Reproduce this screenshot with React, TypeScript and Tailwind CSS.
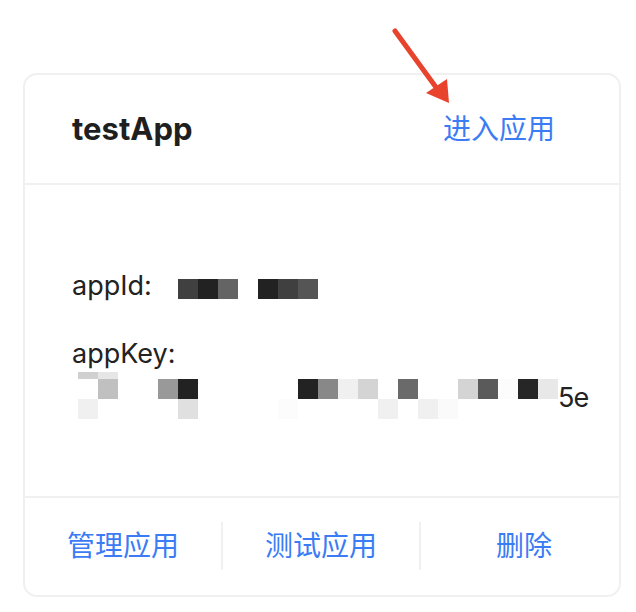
import React from 'react'

// 打码像素块（appKey 第二行）
const keyCells: { col: number; row: number; cls: string }[] = [
  { col: 1, row: 1, cls: 'bg-[#d0d0d0]' },
  { col: 2, row: 1, cls: 'bg-[#e6e6e6]' },
  { col: 2, row: 2, cls: 'bg-[#c0c0c0]' },
  { col: 5, row: 2, cls: 'bg-[#999999]' },
  { col: 6, row: 2, cls: 'bg-[#222222]' },
  { col: 12, row: 2, cls: 'bg-[#222222]' },
  { col: 13, row: 2, cls: 'bg-[#888888]' },
  { col: 14, row: 2, cls: 'bg-[#f0f0f0]' },
  { col: 15, row: 2, cls: 'bg-[#d4d4d4]' },
  { col: 17, row: 2, cls: 'bg-[#6a6a6a]' },
  { col: 20, row: 2, cls: 'bg-[#d4d4d4]' },
  { col: 21, row: 2, cls: 'bg-[#5a5a5a]' },
  { col: 22, row: 2, cls: 'bg-[#fcfcfc]' },
  { col: 23, row: 2, cls: 'bg-[#262626]' },
  { col: 24, row: 2, cls: 'bg-[#e8e8e8]' },
  { col: 1, row: 3, cls: 'bg-[#f0f0f0]' },
  { col: 6, row: 3, cls: 'bg-[#e0e0e0]' },
  { col: 11, row: 3, cls: 'bg-[#fcfcfc]' },
  { col: 16, row: 3, cls: 'bg-[#f0f0f0]' },
  { col: 18, row: 3, cls: 'bg-[#f0f0f0]' },
  { col: 19, row: 3, cls: 'bg-[#fafafa]' },
]

const colClass: Record<number, string> = {
  1: 'col-start-1', 2: 'col-start-2', 5: 'col-start-5', 6: 'col-start-6',
  11: 'col-start-11', 12: 'col-start-12', 13: 'col-start-13', 14: 'col-start-[14]',
  15: 'col-start-[15]', 16: 'col-start-[16]', 17: 'col-start-[17]', 18: 'col-start-[18]',
  19: 'col-start-[19]', 20: 'col-start-[20]', 21: 'col-start-[21]', 22: 'col-start-[22]',
  23: 'col-start-[23]', 24: 'col-start-[24]',
}
const rowClass: Record<number, string> = { 1: 'row-start-1', 2: 'row-start-2', 3: 'row-start-3' }

function Arrow() {
  return (
    <svg className="absolute left-0 top-0 pointer-events-none" width="636" height="120" viewBox="0 0 636 120">
      <line x1="395" y1="31" x2="438" y2="90" stroke="#e8432c" strokeWidth="5" strokeLinecap="round" />
      <polygon points="449,103 426,93 447,79" fill="#e8432c" />
    </svg>
  )
}

export default function App() {
  return (
    <div
      className="relative w-[636px] h-[612px] bg-white overflow-hidden"
      style={{ fontFamily: 'Inter, "Noto Sans CJK SC", sans-serif' }}
    >
      <Arrow />
      <div className="ml-[23px] mt-[73px] w-[598px] border-2 border-[#f0f0f0] rounded-[14px] bg-white">
        {/* 头部 */}
        <div className="h-[110px] pl-[47px] pr-[64px] flex items-center justify-between border-b-2 border-[#f0f0f0]">
          <span className="text-[31px] font-bold text-[#1f1f1f]">testApp</span>
          <span className="text-[28px] text-[#3b7cf5]">进入应用</span>
        </div>

        {/* 内容 */}
        <div className="pt-[79px] pb-[76px] pl-[47px] text-[27px] leading-[44px] text-[#222]">
          <div className="flex items-center h-[44px]">
            <span>appId:</span>
            <div className="flex ml-[26px] mt-[6px]">
              <div className="w-[20px] h-[20px] bg-[#404040]" />
              <div className="w-[20px] h-[20px] bg-[#222222]" />
              <div className="w-[20px] h-[20px] bg-[#646464]" />
            </div>
            <div className="flex ml-[20px] mt-[6px]">
              <div className="w-[20px] h-[20px] bg-[#222222]" />
              <div className="w-[20px] h-[20px] bg-[#404040]" />
              <div className="w-[20px] h-[20px] bg-[#555555]" />
            </div>
          </div>
          <div className="mt-[24px] h-[44px]">appKey:</div>
          <div className="flex h-[44px]">
            <div className="grid grid-cols-[repeat(24,20px)] grid-rows-[7px_20px_20px] -mt-[4px] ml-[6px] self-start">
              {keyCells.map((c, i) => (
                <div key={i} className={`${colClass[c.col]} ${rowClass[c.row]} ${c.cls}`} />
              ))}
            </div>
            <span className="tracking-[-1px]">5e</span>
          </div>
        </div>

        {/* 操作栏 */}
        <div className="grid grid-cols-3 pt-[24px] pb-[25px] border-t-2 border-[#f0f0f0] text-[28px] text-[#3b7cf5]">
          <div className="h-[48px] flex items-center justify-center border-r-2 border-[#f0f0f0]">管理应用</div>
          <div className="h-[48px] flex items-center justify-center border-r-2 border-[#f0f0f0]">测试应用</div>
          <div className="h-[48px] flex items-center justify-center pl-[8px]">删除</div>
        </div>
      </div>
    </div>
  )
}
